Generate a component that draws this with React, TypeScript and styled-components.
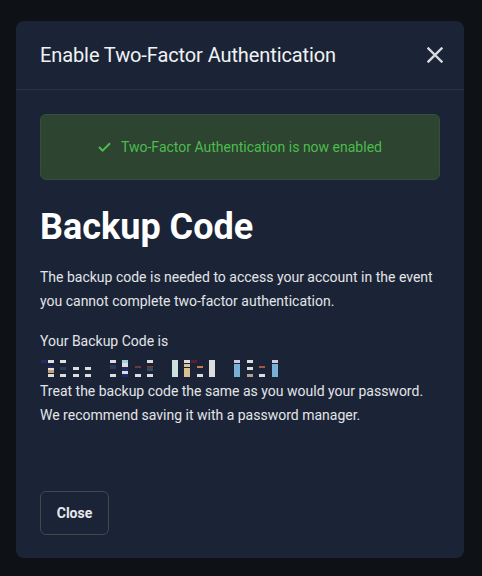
import React from "react";
import styled, { createGlobalStyle } from "styled-components";

const Global = createGlobalStyle`
  html, body { margin: 0; padding: 0; background: #0e1115; }
  body { font-family: Roboto, "Liberation Sans", sans-serif; }
`;

const Page = styled.div`
  width: 482px;
  height: 576px;
  padding: 21px 18px 18px 16px;
  box-sizing: border-box;
  background: #0e1115;
`;

const Modal = styled.div`
  width: 448px;
  height: 537px;
  background: #1b2437;
  border-radius: 8px;
  display: flex;
  flex-direction: column;
  overflow: hidden;
`;

const Header = styled.div`
  height: 68px;
  flex: none;
  display: flex;
  align-items: center;
  justify-content: space-between;
  padding: 0 20px 0 24px;
  border-bottom: 1px solid #2b3242;
`;

const Title = styled.h2`
  margin: 0;
  font-size: 20px;
  font-weight: 400;
  letter-spacing: -0.1px;
  color: #f1f2f4;
`;

const CloseIcon = styled.button`
  background: none;
  border: none;
  padding: 0;
  width: 18px;
  height: 18px;
  display: flex;
  align-items: center;
  justify-content: center;
  color: #d8dbe0;
  cursor: pointer;
`;

const Body = styled.div`
  flex: 1;
  padding: 24px 24px 0 24px;
  display: flex;
  flex-direction: column;
`;

const Alert = styled.div`
  height: 66px;
  box-sizing: border-box;
  border-radius: 6px;
  background: #2c4430;
  border: 1px solid #35503a;
  color: #4cbc4f;
  font-size: 14px;
  display: flex;
  align-items: center;
  justify-content: center;
  gap: 10px;
  padding-bottom: 1px;
`;

const Heading = styled.h1`
  margin: 26px 0 0 0;
  font-size: 36px;
  line-height: 42px;
  font-weight: 700;
  color: #ffffff;
`;

const Para = styled.p<{ $top?: number }>`
  margin: ${(p) => p.$top ?? 0}px 0 0 0;
  font-size: 14px;
  line-height: 24px;
  color: #e3e5e8;
`;

const Code = styled.div`
  height: 25px;
  margin: 5px 0 0 -2px;
`;

const Footer = styled.div`
  padding: 0 24px 23px 24px;
`;

const CloseButton = styled.button`
  width: 69px;
  height: 44px;
  background: transparent;
  border: 1px solid #45474d;
  border-radius: 6px;
  color: #e6e8ec;
  font-family: Roboto, "Liberation Sans", sans-serif;
  font-size: 14px;
  font-weight: 700;
  padding-bottom: 2px;
  cursor: pointer;
`;

const blocks: [number, number, number, number, string][] = [
  [3, 5, 6, 3, "#1e2a6a"], [10, 5, 6, 3, "#e0e0e0"], [22, 5, 6, 3, "#e0e0e0"],
  [10, 11, 6, 2, "#1e2a6a"], [10, 13, 6, 2, "#e0e0e0"], [10, 15, 6, 3, "#c8a070"],
  [22, 12, 6, 3, "#2a3a55"], [35, 12, 6, 3, "#dddddd"], [47, 12, 6, 3, "#dddddd"],
  [10, 19, 6, 3, "#dddddd"], [22, 19, 6, 3, "#dddddd"], [35, 19, 6, 3, "#dddddd"], [47, 19, 6, 3, "#dddddd"],
  [72, 5, 6, 3, "#dddddd"], [84, 5, 6, 3, "#9dd0e0"], [109, 5, 6, 3, "#dddddd"],
  [72, 10, 6, 4, "#2a3a5a"], [84, 8, 6, 4, "#dddddd"], [84, 12, 6, 4, "#1e2a6a"],
  [97, 11, 6, 2, "#6a3a3a"], [109, 11, 6, 2, "#6a3a3a"], [109, 13, 6, 3, "#3a4560"],
  [72, 19, 6, 3, "#dddddd"], [84, 16, 6, 3, "#dddddd"], [84, 19, 6, 3, "#1e2a6a"],
  [97, 19, 6, 3, "#dddddd"], [109, 19, 6, 3, "#dddddd"],
  [134, 5, 6, 17, "#cde0e0"], [146, 5, 6, 3, "#dddddd"], [153, 5, 6, 3, "#5a2030"],
  [146, 9, 6, 3, "#d8c090"], [146, 13, 6, 9, "#d8c090"], [159, 11, 6, 2, "#c08050"],
  [159, 19, 6, 3, "#dddddd"], [171, 5, 6, 17, "#dddddd"],
  [196, 5, 6, 3, "#ccccdd"], [196, 9, 6, 13, "#7ab0d8"], [209, 5, 6, 3, "#dddddd"],
  [209, 12, 6, 3, "#dddddd"], [209, 19, 6, 3, "#b0a090"], [221, 11, 6, 2, "#a05a40"],
  [221, 19, 6, 3, "#dddddd"], [234, 5, 6, 3, "#ccccdd"], [234, 9, 6, 13, "#7ab0d8"],
];

export default function App() {
  return (
    <>
      <Global />
      <Page>
        <Modal>
          <Header>
            <Title>Enable Two-Factor Authentication</Title>
            <CloseIcon aria-label="Close">
              <svg width="16" height="16" viewBox="0 0 16 16">
                <path d="M1.5 1.5 L14.5 14.5 M14.5 1.5 L1.5 14.5" stroke="currentColor" strokeWidth="2.4" strokeLinecap="square" />
              </svg>
            </CloseIcon>
          </Header>
          <Body>
            <Alert>
              <svg width="13" height="10" viewBox="0 0 13 10">
                <path d="M1 5 L4.6 8.6 L12 1.2" fill="none" stroke="currentColor" strokeWidth="2" />
              </svg>
              <span>Two-Factor Authentication is now enabled</span>
            </Alert>
            <Heading>Backup Code</Heading>
            <Para $top={17}>
              The backup code is needed to access your account in the event you cannot complete two-factor authentication.
            </Para>
            <Para $top={16}>Your Backup Code is</Para>
            <Code>
              <svg width="245" height="25" viewBox="0 0 245 25">
                {blocks.map(([x, y, w, h, c], i) => (
                  <rect key={i} x={x} y={y - 3} width={w} height={h} fill={c} />
                ))}
              </svg>
            </Code>
            <Para $top={-4}>
              Treat the backup code the same as you would your password.
              <br />
              We recommend saving it with a password manager.
            </Para>
          </Body>
          <Footer>
            <CloseButton>Close</CloseButton>
          </Footer>
        </Modal>
      </Page>
    </>
  );
}
